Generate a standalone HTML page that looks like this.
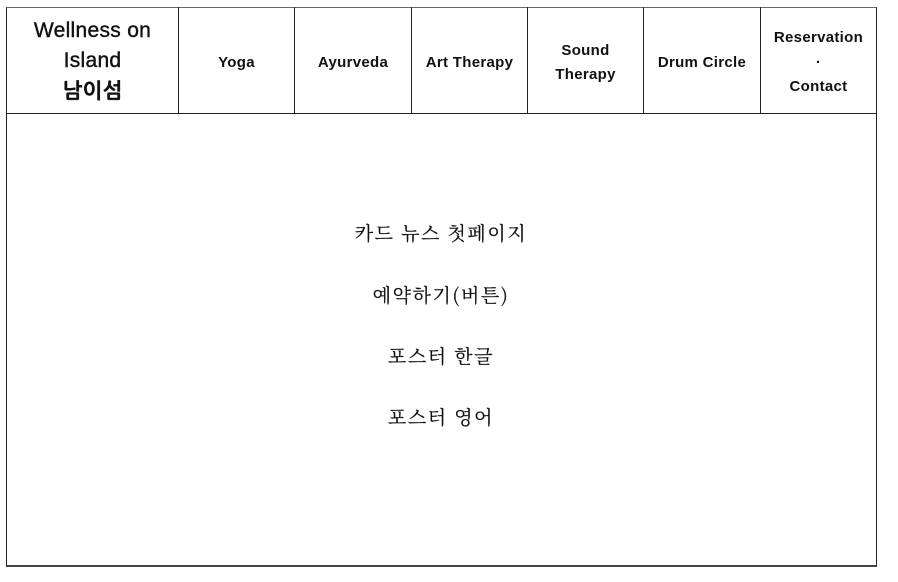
<!DOCTYPE html>
<html><head><meta charset="utf-8"><style>
html,body{margin:0;padding:0;background:#fff;width:898px;height:582px;overflow:hidden}
.frame{position:absolute;left:6px;top:7px;width:869px;height:557px;border:1px solid #222;border-bottom:2px solid #444;border-top:1px solid #666}
.hl{position:absolute;left:6px;top:113px;width:870px;height:1px;background:#222}
.vl{position:absolute;top:7px;height:106px;width:1px;background:#222}
.cell{position:absolute;top:8px;height:105px;display:flex;align-items:center;justify-content:center;text-align:center;box-sizing:border-box;padding-top:5px;
font-family:"Liberation Sans","NanumGothic",sans-serif;font-weight:bold;font-size:15px;line-height:24.5px;color:#111;letter-spacing:0.3px}
.logo{font-size:21px;line-height:30.5px;font-weight:normal;-webkit-text-stroke:0.4px #111;padding-top:2px}
.body{position:absolute;left:6px;width:870px;text-align:center;font-family:"Noto Serif CJK SC","Liberation Serif",serif;font-size:19px;color:#111;letter-spacing:1.6px;-webkit-text-stroke:0.2px #111}
</style></head><body>
<div class="frame"></div>
<div class="hl"></div>
<div class="vl" style="left:178px"></div>
<div class="vl" style="left:294px"></div>
<div class="vl" style="left:411px"></div>
<div class="vl" style="left:527px"></div>
<div class="vl" style="left:643px"></div>
<div class="vl" style="left:760px"></div>
<div class="cell logo" style="left:7px;width:171px"><div>Wellness on<br>Island<br><b style="font-family:'NanumGothic',sans-serif">남이섬</b></div></div>
<div class="cell" style="left:179px;width:115px"><div>Yoga</div></div>
<div class="cell" style="left:295px;width:116px"><div>Ayurveda</div></div>
<div class="cell" style="left:412px;width:115px"><div>Art Therapy</div></div>
<div class="cell" style="left:528px;width:115px"><div>Sound<br>Therapy</div></div>
<div class="cell" style="left:644px;width:116px"><div>Drum Circle</div></div>
<div class="cell" style="left:761px;width:115px"><div>Reservation<br>·<br>Contact</div></div>
<div class="body" style="top:219px">카드 뉴스 첫페이지</div>
<div class="body" style="top:281px">예약하기(버튼)</div>
<div class="body" style="top:342px">포스터 한글</div>
<div class="body" style="top:403px">포스터 영어</div>
</body></html>
